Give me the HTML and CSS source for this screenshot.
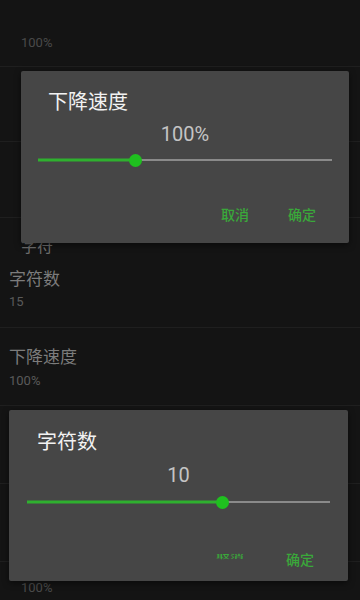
FILE: index.html
```html
<!DOCTYPE html>
<html>
<head>
<meta charset="utf-8">
<link rel="stylesheet" href="styles.css">
</head>
<body>
<div class="screen">
  <div class="list">
    <div class="row r0"><div class="sum dim">100%</div></div>
    <div class="row r1"></div>
    <div class="row r2"></div>
    <div class="row r3">
      <div class="cat">字符</div>
      <div class="title">字符数</div>
      <div class="sum">15</div>
    </div>
    <div class="row r4">
      <div class="title">下降速度</div>
      <div class="sum">100%</div>
    </div>
    <div class="row r5"></div>
    <div class="row r6"></div>
    <div class="row r7"><div class="sum dim">100%</div></div>
  </div>

  <div class="dialog d1">
    <div class="d-title">下降速度</div>
    <div class="d-value">100%</div>
    <div class="slider">
      <div class="track"><div class="fill" style="width:33%"></div></div>
      <div class="thumb" style="left:33%"></div>
    </div>
    <div class="buttons">
      <span class="btn">取消</span>
      <span class="btn">确定</span>
    </div>
  </div>

  <div class="dialog d2">
    <div class="d-title">字符数</div>
    <div class="d-value">10</div>
    <div class="slider">
      <div class="track"><div class="fill" style="width:64.4%"></div></div>
      <div class="thumb" style="left:64.4%"></div>
    </div>
    <div class="buttons">
      <span class="btn squash">取消</span>
      <span class="btn">确定</span>
    </div>
  </div>
</div>
</body>
</html>
```
FILE: styles.css
```css
* { box-sizing: border-box; }
html, body { margin: 0; padding: 0; }
body {
  background: #141414;
  font-family: Roboto, "Noto Sans CJK SC", sans-serif;
}
.screen {
  position: relative;
  width: 360px;
  height: 600px;
  overflow: hidden;
}
.list { display: flex; flex-direction: column; }
.row { border-bottom: 1px solid #1f1f1f; padding-left: 9px; }
.r0 { height: 67px; padding-top: 35px; padding-left: 21px; }
.r1 { height: 75px; }
.r2 { height: 76px; }
.r3 { height: 110px; padding-top: 19px; }
.r4 { height: 78px; padding-top: 19px; }
.r5 { height: 78px; }
.r6 { height: 78px; }
.r7 { height: 40px; padding-top: 18px; padding-left: 21px; border-bottom: none; }
.cat { font-size: 16px; line-height: 20px; color: #6e6e6e; padding-left: 12px; margin-bottom: 12px; }
.title { font-size: 17px; line-height: 20px; color: #7c7c7c; }
.r4 .title { margin-bottom: 6px; }
.r3 .title { margin-bottom: 5px; }
.sum { font-size: 13px; line-height: 16px; color: #5a5a5a; }
.sum.dim { color: #4a4a4a; }

.dialog {
  position: absolute;
  background: #464646;
  border-radius: 2px;
  box-shadow: 0 2px 6px rgba(0,0,0,0.5);
  display: flex;
  flex-direction: column;
}
.d1 { left: 21px; top: 71px; width: 328px; height: 172px; padding: 19px 33px 0 27px; }
.d2 { left: 9px; top: 410px; width: 339px; height: 171px; padding: 20px 34px 0 28px; }
.d-title { font-size: 20px; line-height: 24px; color: #f2f2f2; }
.d-value { font-size: 20px; line-height: 22px; color: #c4c4c4; text-align: center; margin-left: -27px; margin-right: -33px; }
.d1 .d-value { margin-top: 9px; }
.d2 .d-value { margin-top: 10px; margin-left: -28px; margin-right: -34px; }
.slider { position: relative; height: 16px; }
.d1 .slider { margin: 7px -16px 0 -10px; }
.d2 .slider { margin: 8px -16px 0 -10px; }
.track { position: absolute; left: 0; right: 0; top: 7px; height: 2px; background: #8a8a8a; }
.fill { height: 100%; background: #2fb02f; transform: scaleY(1.5); }
.thumb {
  position: absolute; top: 1.5px; width: 13px; height: 13px; margin-left: -6.5px;
  border-radius: 50%; background: #1fc01f;
}
.buttons { display: flex; justify-content: flex-end; gap: 39px; }
.d1 .buttons { margin-top: 37px; }
.d2 .buttons { margin-top: 40px; gap: 42px; }
.btn { font-size: 14px; line-height: 20px; color: #3aa83a; font-weight: 500; }
.squash { display: inline-block; transform: translateY(-4px) scaleY(0.3); }
```
